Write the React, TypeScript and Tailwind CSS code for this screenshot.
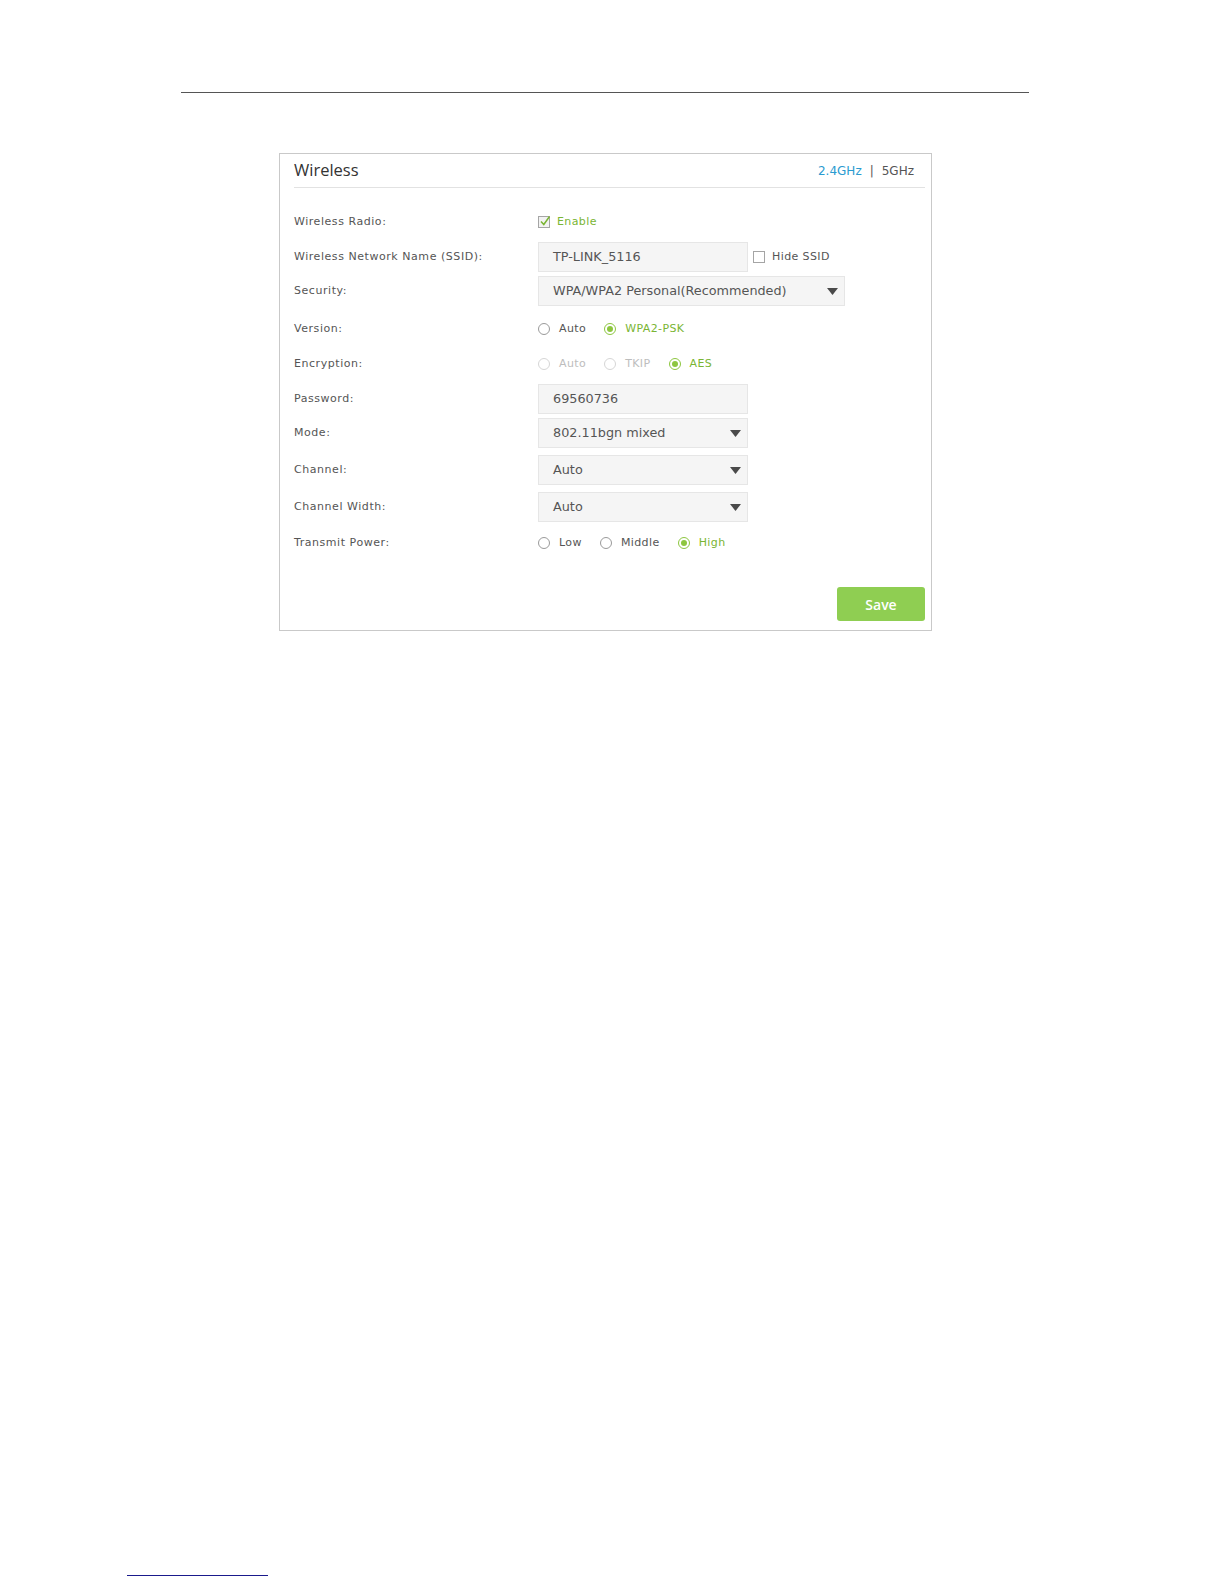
import React from "react"

const label = "text-[11px] text-[#555] tracking-[0.55px]"
const font = { fontFamily: '"DejaVu Sans", Verdana, sans-serif' }

function Radio({ checked, disabled, text }: { checked?: boolean; disabled?: boolean; text: string }) {
  const ring = checked ? "border-[#8dc63f]" : disabled ? "border-[#d6d6d6]" : "border-[#9a9a9a]"
  const txt = checked ? "text-[#7ab534]" : disabled ? "text-[#bdbdbd]" : "text-[#555]"
  return (
    <div className="flex items-center gap-[9px] mr-[18px]">
      <span className={`w-[12px] h-[12px] rounded-full border bg-white flex items-center justify-center ${ring}`}>
        {checked && <span className="w-[6px] h-[6px] rounded-full bg-[#8dc63f]" />}
      </span>
      <span className={`text-[11px] tracking-[0.4px] ${txt}`}>{text}</span>
    </div>
  )
}

function Caret() {
  return (
    <svg width="11" height="7" viewBox="0 0 11 7" className="shrink-0">
      <path d="M0 0h11L5.5 7z" fill="#4a4a4a" />
    </svg>
  )
}

function Box({ value, width = "w-[210px]", select }: { value: string; width?: string; select?: boolean }) {
  return (
    <div className={`h-[30px] ${width} bg-[#f5f5f5] border border-[#e6e6e6] flex items-center justify-between pl-[14px] pr-[6px]`}>
      <span className="text-[12.8px] text-[#555]">{value}</span>
      {select && <Caret />}
    </div>
  )
}

function Row({ name, mt, children }: { name: string; mt: string; children: React.ReactNode }) {
  return (
    <div className={`flex items-center h-[30px] ${mt}`}>
      <div className={`w-[244px] shrink-0 ${label}`}>{name}</div>
      <div className="flex items-center">{children}</div>
    </div>
  )
}

export default function App() {
  return (
    <div className="bg-white flex flex-col pt-[92px] pb-[6px]" style={font}>
      <div className="ml-[181px] w-[848px] h-px bg-[#555]" />

      <div className="ml-[279px] mt-[60px] w-[653px] h-[478px] shrink-0 border border-[#c9c9c9] pl-[14px] pr-[6px] flex flex-col">
        <div className="h-[34px] flex items-center justify-between border-b border-[#e2e2e2]">
          <span className="text-[16.5px] text-[#333]" style={{ fontFamily: '"Open Sans", sans-serif' }}>Wireless</span>
          <div className="flex items-center gap-[8px] text-[12px] pr-[11px]">
            <span className="text-[#2a9bd0]">2.4GHz</span>
            <span className="text-[#555]">|</span>
            <span className="text-[#555]">5GHz</span>
          </div>
        </div>

        <Row name="Wireless Radio:" mt="mt-[19px]">
          <div className="flex items-center gap-[7px]">
            <span className="w-[12px] h-[12px] border border-[#a5a5a5] bg-[#f3f3f3] relative">
              <svg width="12" height="12" viewBox="0 0 12 12" className="absolute -top-[2px] left-[0px]">
                <path d="M2 6.5l2.8 3L10.5 1.5" stroke="#7ab534" strokeWidth="1.5" fill="none" />
              </svg>
            </span>
            <span className="text-[11px] tracking-[0.4px] text-[#7ab534]">Enable</span>
          </div>
        </Row>

        <Row name="Wireless Network Name (SSID):" mt="mt-[5px]">
          <Box value="TP-LINK_5116" />
          <div className="flex items-center gap-[7px] ml-[5px]">
            <span className="w-[12px] h-[12px] border border-[#a5a5a5] bg-white" />
            <span className="text-[11px] tracking-[0.4px] text-[#555]">Hide SSID</span>
          </div>
        </Row>

        <Row name="Security:" mt="mt-[4px]">
          <Box value="WPA/WPA2 Personal(Recommended)" width="w-[307px]" select />
        </Row>

        <Row name="Version:" mt="mt-[8px]">
          <Radio text="Auto" />
          <Radio text="WPA2-PSK" checked />
        </Row>

        <Row name="Encryption:" mt="mt-[5px]">
          <Radio text="Auto" disabled />
          <Radio text="TKIP" disabled />
          <Radio text="AES" checked />
        </Row>

        <Row name="Password:" mt="mt-[5px]">
          <Box value="69560736" />
        </Row>

        <Row name="Mode:" mt="mt-[4px]">
          <Box value="802.11bgn mixed" select />
        </Row>

        <Row name="Channel:" mt="mt-[7px]">
          <Box value="Auto" select />
        </Row>

        <Row name="Channel Width:" mt="mt-[7px]">
          <Box value="Auto" select />
        </Row>

        <Row name="Transmit Power:" mt="mt-[6px]">
          <Radio text="Low" />
          <Radio text="Middle" />
          <Radio text="High" checked />
        </Row>

        <div className="flex justify-end mt-[29px]">
          <button className="w-[88px] h-[34px] rounded-[3px] bg-[#8fce52] text-white text-[14px] font-semibold" style={{ fontFamily: '"Open Sans", sans-serif' }}>
            Save
          </button>
        </div>
      </div>

      <div className="mt-[944px] ml-[127px] w-[141px] h-px bg-[#1a1a8c]" />
    </div>
  )
}
